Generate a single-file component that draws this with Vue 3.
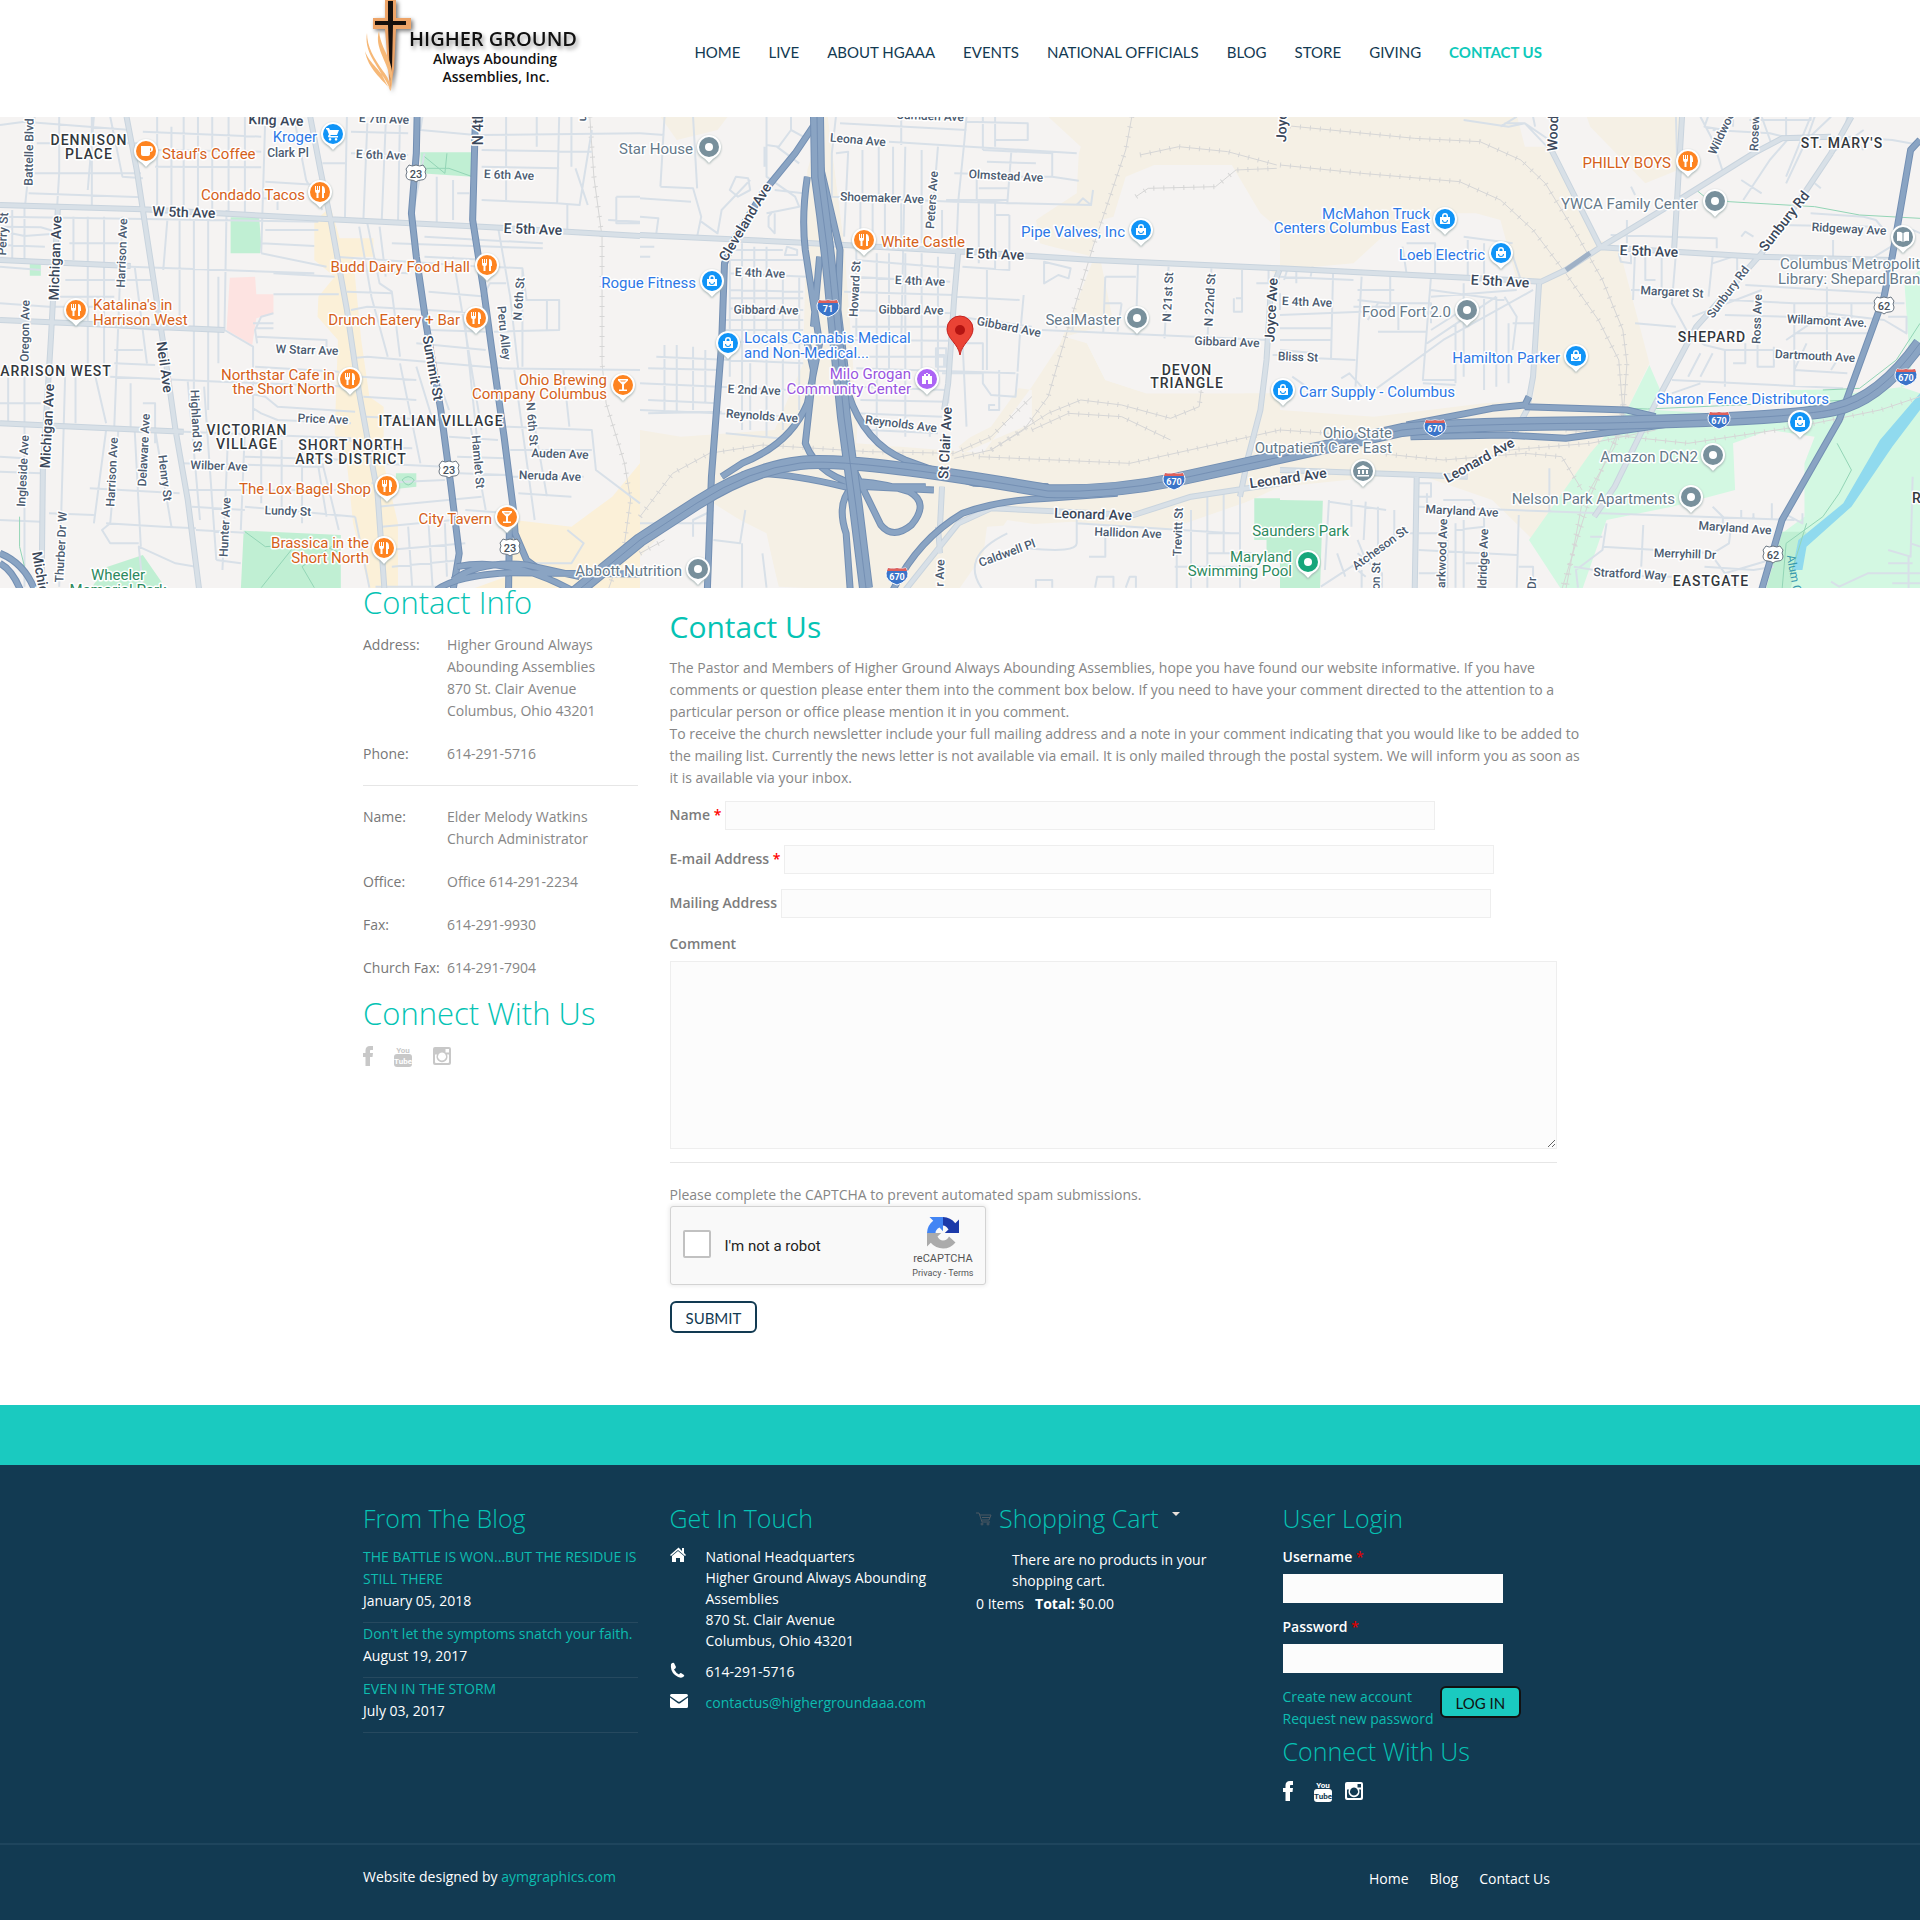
<script setup>
import { ref } from 'vue'

const nav = ['HOME', 'LIVE', 'ABOUT HGAAA', 'EVENTS', 'NATIONAL OFFICIALS', 'BLOG', 'STORE', 'GIVING', 'CONTACT US']

const people = [
  ['Address:', ['Higher Ground Always', 'Abounding Assemblies', '870 St. Clair Avenue', 'Columbus, Ohio 43201']],
  ['Phone:', ['614-291-5716']],
]
const staff = [
  ['Name:', ['Elder Melody Watkins', 'Church Administrator']],
  ['Office:', ['Office 614-291-2234']],
  ['Fax:', ['614-291-9930']],
  ['Church Fax:', ['614-291-7904']],
]
const posts = [
  ['THE BATTLE IS WON...BUT THE RESIDUE IS STILL THERE', 'January 05, 2018'],
  ["Don't let the symptoms snatch your faith.", 'August 19, 2017'],
  ['EVEN IN THE STORM', 'July 03, 2017'],
]

const form = ref({ name: '', email: '', mailing: '', comment: '' })
const login = ref({ user: '', pass: '' })
const robot = ref(false)

/* The map is three tiles, each on a 1568 x 1455 grid that covers 640 x 485 px. */
const mx = (tile, x) => Math.round(tile * 640 + x / 2.45)
const my = (y) => Math.round(y / 3 - 7)
const tileTransform = (tile) => `translate(${tile * 640} -7) scale(.40816 .33333)`
const trunk = 'M817 0L818 60Q828 130 834 200L844 300L856 390L866 471M570 480L640 423L697 386Q750 352 800 346T1048 374Q1110 376 1174 363L1280 340L1402 313Q1450 307 1606 306Q1790 302 1835 292T1920 226'

const tiles = [
  {
    tan: 'M770 335L810 290L832 385L915 385L915 440L865 440L885 690L905 860L940 890L940 1060L975 1240L975 1440L905 1440L865 1240L850 1060L820 970L828 690L778 620L780 560L820 500L770 450ZM1260 1230L1400 1250L1500 1160L1568 1060L1568 1440L1150 1440L1240 1400Z',
    yard: '',
    green: 'M565 322H635L640 405L637 430H565ZM1030 127H1157V200L1030 190ZM73 455H100V497H73ZM597 1262L835 1275V1440H590ZM260 1372L350 1335L398 1420L380 1440H220ZM970 1090H1020V1130L970 1137Z',
    mint: '',
    pink: 'M563 503L625 500L628 553H670V610L628 625L618 705L555 660Z',
    water: '',
    minor: 'M0 45L60 35L320 60M230 20L215 240M85 20L62 280M145 20V190L140 290M225 20V290M90 100H360M85 190H345M70 250L350 262M270 20L300 200L350 205M385 20V300M420 50V300M450 20V320M485 20V320M520 20V320M560 20V320M600 20V320M650 20L640 430M720 20L750 210L790 300M350 65L640 80M370 120L640 125M380 170L640 172M650 215L780 225M640 265L740 270M680 270V300M850 20L845 330M900 40L890 340M945 40L935 340M980 20L975 345M790 160H850M860 65L1000 70M860 130L1000 135M1035 20L1030 60L1165 75L1568 70M1040 130L1010 320M1070 200V340M1110 210V330M1120 250H1150M1240 20V270M1180 120L1450 125M1180 170L1370 175M1315 20V110M1370 20L1365 280L1420 285L1450 60M1400 20V170M1180 270L1365 280M1390 285L1390 360M1440 285L1410 175M1510 260H1568M1510 260V340H1568M1490 330L1568 335M0 320L780 335M0 350L100 352L150 370L60 378L10 365M0 405L110 410M60 280V450M30 300V450M0 450L320 470L770 490M0 470L100 480M0 580L120 590M0 630L550 660M180 320V450M215 320V800M255 320V760M300 320L280 950M330 470L360 760M410 330L400 480M440 330V640M475 330V850M510 330V900M535 500V760M555 300L550 660L620 710L620 930M170 400H300M160 510H370M130 560H280M120 590H330M270 650L390 660M280 720H350M280 760L380 765M270 800L540 815M640 430L800 470M640 400L770 408M650 360H780M670 490L820 500M670 553H830M670 610L640 620L625 660L630 700M630 680L800 690L800 730M625 770L830 785M540 815L860 830M610 850L650 860L680 890L870 905M620 895L640 910L680 930L860 940M820 440L1180 470M830 480L1000 490M850 545L960 550M860 600L900 590L1190 610M900 340L930 520L960 545L970 640L980 740M880 350L910 560L950 740M930 350L945 500M960 400L1330 415M1040 380L1330 400M1040 440L1200 450M860 745L900 740L1230 775L1568 780M885 800L1020 810M890 860L1020 870M895 920L1080 930M900 1010L1010 1015M905 1060L1090 1070M910 1120L1090 1110M925 1190L1180 1160M935 1250L1110 1230M950 1320L1140 1300M960 1370L1130 1350M980 760L1030 1060M1020 770L1060 930M1060 760L1100 900M1110 440L1180 960M1140 650L1170 1000M1050 545L1195 560M1050 600L1180 610M1055 660L1190 665M1020 700L1190 720M1200 470L1280 475L1290 570L1370 570L1370 660L1210 665M1220 350L1250 560L1270 780M1280 480V770M1340 570V660M1260 780L1310 1230M1210 780L1230 950M1240 950L1450 960L1460 1080L1568 1180M1250 1020H1450M1250 1100H1430M1270 1150L1400 1160M1310 950L1340 1160M1380 780L1395 950M1100 980L1220 990M1120 1040L1240 1045M1125 1090L1245 1095M1140 1200L1255 1210M1150 930L1190 1200M0 940L450 965L860 985M20 770V940M60 790V1430M0 880H100M160 780L145 1430M185 800V940M230 780L260 940M320 820V950M350 880L380 880L380 1000M460 815L490 1230M500 830L530 1350M560 940L545 1380M600 960L590 1260M440 1060L790 1070M600 1040L870 1050M450 1140H860M220 1135L440 1150M470 1190L600 1200M600 1190L870 1220M480 1260L600 1268M530 1350L590 1360M480 1370L430 1360L340 1310L350 1433M260 1240L400 1250L480 1255M270 1240L250 1260L270 1300H340M260 960L230 1240M290 960L270 1240M330 960L345 1310M380 960L420 1250M640 1000V1180M690 990V1220M740 1000V1240M790 1060L830 1260M0 1085L100 1090M0 1040L60 1045M120 1210L230 1215M0 1230L100 1235M850 990L900 1000M780 1070L800 1220M1260 1260L1300 1360H1400L1430 1300L1390 1260M620 640L670 640M1000 1250L1010 1433M1050 1240L1060 1433M1090 1240L1095 1400M870 1220L905 1433M920 1430H1070M1180 570L1200 520H1240M630 655H670',
    major: 'M0 285L350 298L810 328L1180 350L1568 378M760 20L785 180L810 330L850 600L880 850L925 1150L942 1440M310 20L335 180L375 500L400 700L430 960L460 1170L488 1440M142 290L125 680L105 1080L102 1440M0 450L320 468M0 630L550 660M0 940L450 965',
    rail: 'M1445 20L1455 200L1475 380L1475 760L1485 880L1530 1060L1545 1170L1530 1300L1490 1440',
    blue: 'M1022 15L1020 130L1008 310L1020 440L1045 650L1080 900L1105 1130L1125 1330L1110 1440M1165 15L1158 330L1185 540L1205 720L1235 980L1258 1200L1262 1270L1290 1350L1340 1395M1248 1260L1246 1440',
    hwy: 'M1070 1440Q1120 1395 1250 1388L1568 1392M1120 1370Q1250 1340 1400 1440M0 1330Q60 1360 85 1440M0 1360Q30 1380 50 1440M1110 1410Q1180 1350 1290 1365L1420 1400',
    trail: 'M48 1220V1310L60 1370M600 1265L650 1310L780 1300L835 1330M835 1290L740 1370L770 1433M640 1433L720 1310M1040 140L1090 190L1095 130M1045 175H1100L1157 200M985 1110Q1000 1090 1015 1110Q1000 1140 985 1110',
  },
  {
    tan: '',
    yard: 'M50 20H215L190 60L90 90ZM460 15L500 400L560 400L530 1000L840 1030L960 830L1030 700L1110 440L975 400L970 330L1050 240L1080 110L1000 20H1568V500L1530 470L1470 480L1110 440L1130 460L1160 640L1040 680L1095 700L1140 810L1240 850L1480 850L1568 800V1130L1480 1180L1290 1260H1060L900 1230L780 1440H500L340 1430L310 1280L180 1180L90 1220L0 1370V960L100 980L330 960L400 760L410 180L450 20ZM900 830L860 930L780 1010L790 1030L960 940L960 840ZM400 700L500 700L500 900L420 880Z',
    land: 'M1160 320L1190 200L1260 165H1400L1450 165L1520 310L1568 360V470L1100 440L1130 330ZM460 20H1000L1075 130L1070 250L970 330L980 400L1110 450L1050 640L930 830L860 950L780 1000L600 1010L530 900L500 400ZM1070 680L1568 700V850L1480 850L1240 850L1140 810L1095 700ZM0 1340L90 1225L180 1190L310 1270L340 1440H0ZM830 1440L850 1250L1060 1235L1290 1260L1500 1170L1568 1170V1440Z',
    green: 'M1505 1165H1568V1330H1535V1290H1505Z',
    mint: '', pink: '', water: '',
    minor: 'M60 20L50 230M0 70L60 75M50 230L130 235L150 320L140 380M130 20L140 235M0 265L125 275M0 320L45 325L40 370M0 410H35M0 440H25M310 20V200L380 260L390 290L310 310M310 105L340 110L370 60L400 80M370 20V60M335 110L390 160M305 110V170M235 200L265 205L270 240L240 260L220 240ZM270 210L200 300L190 370L150 335M330 310V370L315 350V320L325 305M400 250L330 240M360 410L385 420V435H355ZM480 20L470 130L470 260L770 275L1105 285L1110 240M490 40L800 60M640 20V105M800 35L950 40V90H870M800 20L795 90L780 270L775 420M610 95L1070 130M480 130L510 125L500 380M545 120V250M585 110V260M620 110V260M650 110L640 700M690 120V260M730 110L720 260M840 20V120M870 20V110M910 120L900 280L825 270V180M840 120L1010 130V200H900M850 155L970 160M1010 200L1075 212M770 190L840 192M830 235H900M750 270H900M830 270V460M870 280V480M905 315V480L790 470M870 315H905M1070 285L1085 265L1105 285M540 275V380M570 280V400M600 280V400M640 280V400M690 280V400M740 300V410M530 380V680M580 430V1000M610 430V800M650 430V980M690 430V800M730 440V800M530 450L770 475M520 500L760 515M500 545L770 555M510 600L770 610M520 650H760M520 690L755 692M520 740H750M530 775L920 790M530 830L750 840M540 870L750 875M530 910L740 920M560 960L730 970M710 940V980M220 400V800M250 400V960M280 410V700M310 410V960M350 480V960M390 500V900M220 420H350M220 450H400M220 490L410 500M220 540L400 545M220 565H400M220 595L400 600M210 630H400M210 660H400M210 695L405 700M40 740L400 760M20 775L200 780M0 820L370 840M20 870L190 880M0 900L380 920M20 910L200 905M210 970L340 985M60 705V910M90 705V905M130 710V900M160 720V880M270 760V960M310 760V980M780 480L765 650L755 880M850 480L850 780M940 555L930 690L925 785M780 620L960 650M780 700H840V780M775 560L930 570M790 690L800 950M725 715H750V770H725ZM730 735H745V770M840 790V820L860 855L920 860L925 790M880 780V860M880 860V900H855V885H870M740 790H840M990 455L1055 475L1050 505L1025 495L990 520ZM1220 465L1215 660M1140 500H1215M1140 500L1135 665M1140 580H1180M1180 580L1170 665M1295 470L1285 685M1400 475L1390 690M1460 565H1475M1455 565V605H1475V480M1510 520H1568M1550 735H1568M1540 470V520M985 660L1540 690M1060 665V640M1020 655V625M180 1290L245 1300L258 1200M180 1200L130 1230V1280M300 1330L310 1433M250 1300V1433M840 1440Q780 1340 900 1270M1070 1220V1300Q1070 1330 950 1315M1070 1240L1450 1270M1100 1340H1140V1280M1390 1150V1433M1430 1150V1330M1470 1155V1433M1350 1200V1440M1310 1370H1500M1315 1200V1440M1390 1270H1470M1390 1330H1500M970 1433V1410H1010V1433M1115 1433L1120 1400H1160V1433M1190 1433L1200 1400H1215V1433M0 1240H180',
    major: 'M0 375L400 398L800 425L1110 450L1568 475M780 420L770 560L755 820L745 900M740 1130L735 1250M1568 475L1545 550L1535 750L1520 900L1490 1040L1470 1160M650 1440L780 1240L860 1195L1210 1215L1350 1160L1568 1120M730 1250L735 1330',
    rail: 'M1205 20L1190 120L1110 410L1050 650L1000 860L940 960L860 1020L770 1045M1215 260L1245 235L1410 230L1460 180L1560 175M1225 135L1320 110L1440 125L1560 165M0 1220L80 1090L170 1030L300 1005L560 1025L770 1030L860 980L960 860M830 1040L1200 1060L1568 960M860 1020L1000 910L1080 870L1180 885L1300 925L1370 890L1375 840M960 960L1050 910L1180 920L1300 990M0 1330L60 1290',
    blue: 'M435 30L380 130L300 250L230 390L207 460L200 700L175 1100L165 1440',
    hwy: 'M410 200Q395 320 405 420L440 700L410 880Q370 1000 250 1060L200 1100M440 160L490 420L485 600L510 850Q550 1000 650 1050L740 1090M410 700L425 780L405 1000Q440 1110 560 1130L720 1140M250 1095Q330 1080 500 1130L700 1130M520 1070L590 1245Q620 1290 665 1245Q710 1180 660 1145Q600 1120 540 1115M620 1440Q680 1290 790 1210Q880 1170 1000 1165L1170 1150M520 1130Q480 1180 505 1270L515 1440M590 1070Q700 1070 820 1120L1000 1130M440 440L425 650M460 440L470 600L500 700',
    trail: '',
  },
  {
    tan: '',
    yard: 'M0 15H580L600 110L660 110L780 390L830 410L905 760L850 900L740 1080L620 1290L520 1170L330 1090L0 1130V900L230 920L500 880L620 870L640 520L580 510L540 330L480 310L390 310L260 370L180 460L0 480ZM750 15H985L975 180L895 220L760 50Z',
    green: 'M0 1170L105 1172L98 1440H0ZM1230 1265H1290L1250 1440H1190Z',
    mint: 'M905 765L935 850L920 900L1200 920L1400 850L1530 830L1568 690V480L1530 520L1540 700L1520 830L1568 850V1440H1240L1230 1270L1285 1220L1285 1060L1310 980L1200 960L1110 1000L1115 1140L960 1190L800 1230L740 1440H690L610 1290L760 1030L850 900ZM1250 840L1390 838L1380 870L1250 860Z',
    pink: '', water: 'M1568 850L1470 990L1380 1180L1270 1290L1255 1380H1280L1290 1310L1400 1190L1500 1010L1568 900Z',
    minor: 'M0 500L180 510M20 470L10 510M80 470L75 500M40 480V520M130 490L125 745M200 500L185 830M0 655H125M0 690H125M0 615L200 605M0 720L90 730L90 745L185 750M190 570L260 580H370V640M240 665H360M370 500L350 810H430M240 580L215 630M290 580V660M310 400H380V500M270 500V590M190 540H280M300 410L310 490M370 540L550 570M370 560L580 540M450 520V800M500 560V840M530 560V830M560 640V820M360 700L530 560M370 660L460 590M550 560L580 620L570 720M570 640H625M430 640V820M350 820L430 825M150 805L170 790L200 830M220 850L400 690L620 540M180 590H270M0 550V600M460 390V500M500 400V500M560 400L590 510M450 380L570 400M100 860L30 800M450 30L560 50L600 40L670 130M540 50L580 20M620 20L625 50M550 40H600L660 90M860 230L870 255M850 330V400M830 430L835 455L860 460V430M810 375L1070 385V415M870 420L865 570M895 430V510L920 510M935 420V540H860M970 430L960 580L1000 670L1040 705L1090 720L1210 720M870 640L970 650M870 540L960 545M1060 440L1050 560M1120 440V520M1060 460L1110 440M1010 620L1180 540M1090 615L1390 625M1100 570L1260 580L1530 580M1140 525L1480 550M1260 580V830M1340 530V730M1400 580V640M1260 670H1440M1340 610L1480 630L1535 670V620L1490 620M1090 720V830M1170 700V770H1210V710M1110 760H1140V700M1290 700L1260 780M1300 640L1240 690M1370 740L1350 780M1260 780L1390 790M960 810L1380 835M1060 730L1030 800M1030 730L1000 800M960 850L1030 820M975 240L970 20M1150 30H1300V20M1030 20L1060 90L1085 185M1060 60L1200 70L1270 90M1180 20L1205 105M1110 20V50M1250 80L1200 150L1135 270M1300 20L1240 200M1350 20L1290 90L1240 220M1230 90L1400 80L1430 120M1240 20V80M1290 90L1310 20M1350 130L1430 60M1390 20L1380 80L1500 90L1568 105M1210 345L1460 350M1300 310L1430 320L1460 330L1480 360M1310 220L1325 235M1130 380L1140 365L1160 380M1355 390V440M1185 440L1450 445L1510 400M1570 370L1550 360L1540 370M1180 250L1130 210M1050 15L1040 50L1090 60M120 1170L110 1380M175 1170V1250M210 1175L205 1290M240 1190V1320M280 1200V1300M120 1175L260 1200M100 1430L300 1270H330M180 1370L210 1400M210 1350L190 1290M140 1330L160 1400M200 1433V1380M250 1433V1390L190 1330M340 1120H370V1160H340M340 1190L1260 1230M340 1320L580 1335M340 1270H410M430 1240V1433M450 1230V1433M500 1200V1433M360 1180V1150M400 1170L470 1170L480 1190M410 1210V1433M340 1390H400M430 1260L500 1250M455 1360H500M585 1215L580 1433M585 1370H620V1433M660 1075V1210M800 1240L790 1320L725 1380L730 1433M720 1370L770 1380M790 1310L1060 1330L1100 1300L1105 1250M890 1245L885 1370M760 1280H790M770 1395L960 1400M1060 1340L1090 1390L1200 1350M1040 1370L1160 1380L1210 1370M1085 1260V1220L1060 1190M1130 1230V1200M1160 1230V1210M1205 1230V1180M1235 1210L1280 1240V1210M1350 1415L1370 1430L1440 1390H1568M1490 1360H1550M1550 1100L1545 1340L1490 1320M1545 1300L1568 1310M1500 1420H1568M1540 1340V1440',
    major: 'M0 475L360 497L640 515L700 480L785 412L1170 440L1500 450M665 120L785 412L990 260L1160 130L1230 85L1350 80M635 515L620 800L605 900L570 980M0 1080L345 1095L460 1100M335 1095L330 1440M1350 130L1290 240L1180 430L1020 650L920 880L820 1130L770 1220M1400 20L1350 130M985 20L965 430',
    rail: 'M0 45L330 85L490 95L590 150L650 220L730 380L790 510L840 660L850 760L840 930L760 1160L690 1440M0 165L200 190L440 215L540 270L620 360L700 490L780 630L830 750L840 900L820 1010L740 1180L700 1440M0 960L120 970L240 1030L400 1050L600 1030L690 1040L740 1140M230 980L380 960M700 960L1000 1000L1270 950L1470 900L1568 860M560 1020L760 1000L920 960',
    blue: 'M1568 90L1545 120L1500 440L1480 560L1370 930L1230 1230L1180 1440',
    hwy: 'M310 945L520 895L600 885L610 860M600 890L850 900L920 920M320 980L550 975L700 985L850 960L990 935',
    trail: 'M1020 240L1040 260L1100 275L1310 290L1420 315L1568 325M620 885L900 897L1400 870M1330 840L1420 835L1510 750L1568 640M1365 1000L1400 1080L1370 1150L1330 1220L1240 1300L1230 1440M1290 1240L1250 1400',
  },
]

/* tile, x, y, text, kind, anchor, angle */
const labels = [
  [0, 218, 91, 'DENNISON', 'area', 'middle'], [0, 218, 132, 'PLACE', 'area', 'middle'],
  [0, 136, 784, 'ARRISON WEST', 'area', 'middle'], [0, 606, 959, 'VICTORIAN', 'area', 'middle'], [0, 606, 1001, 'VILLAGE', 'area', 'middle'],
  [0, 859, 1006, 'SHORT NORTH', 'area', 'middle'], [0, 859, 1047, 'ARTS DISTRICT', 'area', 'middle'], [0, 1080, 934, 'ITALIAN VILLAGE', 'area', 'middle'],
  [1, 1340, 779, 'DEVON', 'area', 'middle'], [1, 1340, 820, 'TRIANGLE', 'area', 'middle'],
  [2, 1378, 100, "ST. MARY'S", 'area', 'middle'], [2, 1058, 680, 'SHEPARD', 'area', 'middle'], [2, 1057, 1412, 'EASTGATE', 'area', 'middle'], [2, 1548, 1165, 'R', 'area'],
  [0, 398, 131, "Stauf's Coffee", 'food'], [0, 747, 254, 'Condado Tacos', 'food', 'end'], [0, 1152, 471, 'Budd Dairy Food Hall', 'food', 'end'],
  [0, 228, 585, "Katalina's in", 'food'], [0, 228, 629, 'Harrison West', 'food'], [0, 1127, 631, 'Drunch Eatery + Bar', 'food', 'end'],
  [0, 820, 794, 'Northstar Cafe in', 'food', 'end'], [0, 820, 838, 'the Short North', 'food', 'end'],
  [0, 1487, 809, 'Ohio Brewing', 'food', 'end'], [0, 1487, 853, 'Company Columbus', 'food', 'end'],
  [0, 909, 1136, 'The Lox Bagel Shop', 'food', 'end'], [0, 1205, 1227, 'City Tavern', 'food', 'end'],
  [0, 903, 1300, 'Brassica in the', 'food', 'end'], [0, 903, 1343, 'Short North', 'food', 'end'],
  [1, 590, 397, 'White Castle', 'food'], [2, 959, 160, 'PHILLY BOYS', 'food', 'end'],
  [0, 777, 80, 'Kroger', 'shop', 'end'], [1, 138, 520, 'Rogue Fitness', 'shop', 'end'], [1, 255, 685, 'Locals Cannabis Medical', 'shop'], [1, 255, 729, 'and Non-Medical...', 'shop'],
  [1, 1188, 366, 'Pipe Valves, Inc', 'shop', 'end'], [2, 368, 311, 'McMahon Truck', 'shop', 'end'], [2, 368, 355, 'Centers Columbus East', 'shop', 'end'],
  [2, 502, 435, 'Loeb Electric', 'shop', 'end'], [2, 686, 744, 'Hamilton Parker', 'shop', 'end'], [2, 47, 847, 'Carr Supply - Columbus', 'shop'], [2, 1346, 867, 'Sharon Fence Distributors', 'shop', 'end'],
  [1, 664, 792, 'Milo Grogan', 'civic', 'end'], [1, 664, 836, 'Community Center', 'civic', 'end'],
  [1, 130, 118, 'Star House', 'place', 'end'], [1, 1179, 630, 'SealMaster', 'place', 'end'], [1, 103, 1384, 'Abbott Nutrition', 'place', 'end'],
  [2, 1025, 281, 'YWCA Family Center', 'place', 'end'], [2, 420, 605, 'Food Fort 2.0', 'place', 'end'],
  [2, 274, 970, 'Ohio State', 'place', 'end'], [2, 274, 1015, 'Outpatient Care East', 'place', 'end'],
  [2, 1024, 1040, 'Amazon DCN2', 'place', 'end'], [2, 968, 1168, 'Nelson Park Apartments', 'place', 'end'],
  [2, 1224, 463, 'Columbus Metropolitan', 'place'], [2, 1219, 507, 'Library: Shepard Branch', 'place'],
  [0, 290, 1396, 'Wheeler', 'park', 'middle'], [0, 290, 1440, 'Memorial Park', 'park', 'middle'],
  [2, 168, 1263, 'Saunders Park', 'park', 'end'], [2, 29, 1340, 'Maryland', 'park', 'end'], [2, 29, 1384, 'Swimming Pool', 'park', 'end'],
  [0, 452, 305, 'W 5th Ave', 'road', 'middle', 2], [0, 1305, 358, 'E 5th Ave', 'road', 'middle', 2], [1, 870, 432, 'E 5th Ave', 'road', 'middle', 2],
  [2, 905, 424, 'E 5th Ave', 'road', 'middle', 2], [2, 540, 514, 'E 5th Ave', 'road', 'middle', 3], [0, 676, 30, 'King Ave', 'road', 'middle', 2],
  [0, 134, 443, 'Michigan Ave', 'road', 'middle', -88], [0, 115, 947, 'Michigan Ave', 'road', 'middle', -87], [0, 104, 1410, 'Michigan', 'road', 'middle', 80],
  [0, 405, 770, 'Neil Ave', 'road', 'middle', 82], [0, 1060, 773, 'Summit St', 'road', 'middle', 80], [0, 1170, 30, 'N 4th St', 'road', 'middle', -90],
  [1, 258, 336, 'Cleveland Ave', 'road', 'middle', -59], [1, 748, 998, 'St Clair Ave', 'road', 'middle', -87], [1, 1545, 600, 'Joyce Ave', 'road', 'middle', -87],
  [1, 1110, 1211, 'Leonard Ave', 'road', 'middle', 2], [2, 20, 1103, 'Leonard Ave', 'road', 'middle', -8], [2, 487, 1050, 'Leonard Ave', 'road', 'middle', -29],
  [2, 1235, 334, 'Sunbury Rd', 'road', 'middle', -52], [2, 670, 30, 'Woodland', 'road', 'middle', -88], [2, 4, 0, 'Joyce Ave', 'road', 'middle', -88],
  [0, 70, 125, 'Battelle Blvd', 'st', 'middle', -89], [0, 940, 28, 'E 7th Ave', 'st', 'middle', 2], [0, 706, 129, 'Clark Pl', 'st', 'middle'], [0, 934, 135, 'E 6th Ave', 'st', 'middle', 2],
  [0, 1248, 196, 'E 6th Ave', 'st', 'middle', 2], [0, 8, 372, 'Perry St', 'st', 'middle', -87], [0, 298, 428, 'Harrison Ave', 'st', 'middle', -88], [0, 62, 662, 'Oregon Ave', 'st', 'middle', -89],
  [0, 753, 720, 'W Starr Ave', 'st', 'middle', 2], [0, 1272, 568, 'N 6th St', 'st', 'middle', -86], [0, 1236, 668, 'Peru Alley', 'st', 'middle', 84], [0, 480, 932, 'Highland St', 'st', 'middle', 87],
  [0, 792, 928, 'Price Ave', 'st', 'middle', 2], [0, 1303, 943, 'N 6th St', 'st', 'middle', 85], [0, 536, 1067, 'Wilber Ave', 'st', 'middle', 2], [0, 1170, 1055, 'Hamlet St', 'st', 'middle', 85],
  [0, 1372, 1031, 'Auden Ave', 'st', 'middle', 2], [0, 1347, 1098, 'Neruda Ave', 'st', 'middle', 2], [0, 352, 1021, 'Delaware Ave', 'st', 'middle', -87], [0, 274, 1086, 'Harrison Ave', 'st', 'middle', -87],
  [0, 57, 1082, 'Ingleside Ave', 'st', 'middle', -87], [0, 404, 1103, 'Henry St', 'st', 'middle', 83], [0, 706, 1203, 'Lundy St', 'st', 'middle', 2], [0, 552, 1250, 'Hunter Ave', 'st', 'middle', -87],
  [0, 150, 1312, 'Thurber Dr W', 'st', 'middle', -87],
  [1, 710, 18, 'Camden Ave', 'st', 'middle', 2], [1, 533, 91, 'Leona Ave', 'st', 'middle', 5], [1, 897, 198, 'Olmstead Ave', 'st', 'middle', 3], [1, 593, 263, 'Shoemaker Ave', 'st', 'middle', 2],
  [1, 715, 271, 'Peters Ave', 'st', 'middle', -86], [1, 293, 489, 'E 4th Ave', 'st', 'middle', 2], [1, 686, 512, 'E 4th Ave', 'st', 'middle', 2], [1, 527, 537, 'Howard St', 'st', 'middle', -87],
  [1, 308, 600, 'Gibbard Ave', 'st', 'middle', 1], [1, 664, 600, 'Gibbard Ave', 'st', 'middle', 1], [1, 905, 650, 'Gibbard Ave', 'st', 'middle', 11], [1, 1437, 695, 'Gibbard Ave', 'st', 'middle', 2],
  [1, 280, 839, 'E 2nd Ave', 'st', 'middle', 2], [1, 299, 917, 'Reynolds Ave', 'st', 'middle', 4], [1, 640, 942, 'Reynolds Ave', 'st', 'middle', 7], [1, 1293, 560, 'N 21st St', 'st', 'middle', -87],
  [1, 1397, 571, 'N 22nd St', 'st', 'middle', -87], [1, 1195, 1268, 'Hallidon Ave', 'st', 'middle', 2], [1, 900, 1328, 'Caldwell Pl', 'st', 'middle', -20], [1, 1318, 1265, 'Trevitt St', 'st', 'middle', -88],
  [1, 734, 1390, 'r Ave', 'st', 'middle', -88], [0, 1427, 24, 'u', 'st', 'middle', -88],
  [2, 65, 575, 'E 4th Ave', 'st', 'middle', 2], [2, 44, 741, 'Bliss St', 'st', 'middle', 2], [2, 1085, 60, 'Wildwood', 'st', 'middle', -65], [2, 1164, 40, 'Rosewood', 'st', 'middle', -88],
  [2, 1395, 358, 'Ridgeway Ave', 'st', 'middle', 3], [2, 961, 547, 'Margaret St', 'st', 'middle', 3], [2, 1098, 547, 'Sunbury Rd', 'st', 'middle', -53], [2, 1169, 628, 'Ross Ave', 'st', 'middle', -88],
  [2, 1341, 633, 'Willamont Ave.', 'st', 'middle', 3], [2, 1310, 737, 'Dartmouth Ave', 'st', 'middle', 3], [2, 447, 1203, 'Maryland Ave', 'st', 'middle', 3], [2, 1114, 1255, 'Maryland Ave', 'st', 'middle', 4],
  [2, 245, 1314, 'Atcheson St', 'st', 'middle', -36], [2, 396, 1340, 'Parkwood Ave', 'st', 'middle', -88], [2, 497, 1356, 'Eldridge Ave', 'st', 'middle', -88], [2, 234, 1398, 'on St', 'st', 'middle', -88],
  [2, 993, 1331, 'Merryhill Dr', 'st', 'middle', 2], [2, 857, 1392, 'Stratford Way', 'st', 'middle', 3], [2, 618, 1418, 'Dr', 'st', 'middle', -88], [2, 1264, 1425, 'Alum Creek', 'creek', 'middle', 80],
].map(([t, x, y, text, kind, anchor = 'start', turn = 0]) => ({ x: mx(t, x), y: my(y), text, kind, anchor, turn }))

const colors = { food: '#fe8421', shop: '#1094f7', place: '#78909c', civic: '#ac64f5', park: '#17a67b' }
const pins = [
  [0, 816, 72, 'shop', 'cart'], [0, 358, 122, 'food', 'cup'], [0, 785, 247, 'food', 'fork'], [0, 1192, 464, 'food', 'fork'], [0, 187, 600, 'food', 'fork'],
  [0, 1165, 624, 'food', 'fork'], [0, 858, 808, 'food', 'fork'], [0, 1527, 824, 'food', 'glass'], [0, 947, 1129, 'food', 'fork'], [0, 1243, 1220, 'food', 'glass'], [0, 942, 1314, 'food', 'fork'],
  [1, 168, 112, 'place', 'dot'], [1, 550, 390, 'food', 'fork'], [1, 1228, 359, 'shop', 'bag'], [1, 177, 513, 'shop', 'bag'], [1, 216, 700, 'shop', 'bag'],
  [1, 704, 806, 'civic', 'hall'], [1, 1218, 623, 'place', 'dot'], [1, 141, 1377, 'place', 'dot'],
  [2, 999, 154, 'food', 'fork'], [2, 1065, 274, 'place', 'dot'], [2, 405, 326, 'shop', 'bag'], [2, 541, 429, 'shop', 'bag'], [2, 459, 599, 'place', 'dot'],
  [2, 725, 738, 'shop', 'bag'], [2, 7, 840, 'shop', 'bag'], [2, 1275, 936, 'shop', 'bag'], [2, 1527, 381, 'place', 'book'], [2, 203, 1084, 'place', 'bank'],
  [2, 1062, 1034, 'place', 'dot'], [2, 1006, 1162, 'place', 'dot'], [2, 69, 1355, 'park', 'dot'],
].map(([t, x, y, kind, glyph]) => ({ x: mx(t, x), y: my(y), fill: colors[kind], glyph }))

const glyphs = {
  fork: 'M-5-6h1v4h1v-4h1v4h1v-4h1v5q0 2-1.500 2v5h-2v-5q-1.500 0-1.500-2zM2-6q3 0 3 5v2h-1v5h-2z',
  cup: 'M-5-5h9q3 0 3 3t-3 3v2q0 2-2 2h-5q-2 0-2-2zM4-3v3q1 0 1-1.500t-1-1.500z',
  glass: 'M-5-6h10v1.500l-4 4v5h3v1.500h-8v-1.500h3v-5l-4-4zM-3-4.500l1 1h4l1-1z',
  bag: 'M-5-2h2v-1a3 3 0 0 1 6 0v1h2v7h-10zM-1.500-2h3v-1a1.500 1.500 0 0 0-3 0zM-3 1a3 3 0 0 0 6 0h-1a2 2 0 0 1-4 0z',
  dot: 'M-4 0a4 4 0 1 0 8 0a4 4 0 1 0-8 0z',
  cart: 'M-7-6h3l1 2h9l-2 5h-6l-1 1h8v1.500h-9q-2-1 0-3l-2-5h-1zM-3 4a1.300 1.300 0 1 0 .1 0zM3 4a1.300 1.300 0 1 0 .1 0z',
  book: 'M-6-5q3-1 5.500 1v9q-2.500-2-5.500-1zM6-5q-3-1-5.500 1v9q2.500-2 5.500-1z',
  bank: 'M0-6l6 3v1h-12v-1zM-5-1h2v4h-2zM-1-1h2v4h-2zM3-1h2v4h-2zM-6 4h12v1.500h-12z',
  hall: 'M-5 5v-8h2v-2h6v2h2v8h-4v-4h-2v4zM-1-6h2v3h-2z',
}

const usShields = [[0, 1018, 189, '23'], [0, 1099, 1076, '23'], [0, 1249, 1310, '23'], [2, 1479, 585, '62'], [2, 1207, 1331, '62']].map(([t, x, y, n]) => ({ x: mx(t, x), y: my(y), n }))
const interstates = [[1, 460, 594, '71'], [1, 1308, 1114, '670'], [1, 630, 1398, '670'], [2, 379, 955, '670'], [2, 1076, 930, '670'], [2, 1533, 802, '670']].map(([t, x, y, n]) => ({ x: mx(t, x), y: my(y), n }))
</script>

<template>
  <div class="page">
    <header class="top wrap">
      <a href="#" class="logo" aria-label="Higher Ground Always Abounding Assemblies, Inc.">
        <svg width="230" height="96" viewBox="0 0 230 96">
          <g class="shade">
            <path d="M22 0h11v18h15v11H33l-2 40-4 22-5-62H10V18h12z" fill="#eda468" />
            <path d="M25 1h5v20h13v4H30l-1 42-2 14-2-56H12v-4h13z" fill="#150f0c" />
          </g>
          <path d="M4 33c-3 18 9 30 15 42 4 8 6 12 9 16-1-9-3-14-8-20C11 58 4 47 4 33zM16 31c-5 16 8 30 11 46 1 4 1 8 1 13 2-10 2-20-2-30-3-8-9-17-10-29zM2 51c5 14 16 17 25 38-8-10-22-20-25-38z" fill="#f6b877" />
          <text x="46" y="46" class="logo-a">HIGHER GROUND</text>
          <text x="132" y="64" class="logo-b" text-anchor="middle">Always Abounding</text>
          <text x="133" y="82" class="logo-b" text-anchor="middle">Assemblies, Inc.</text>
        </svg>
      </a>
      <nav class="menu">
        <a v-for="item in nav" :key="item" href="#" :class="{ on: item === 'CONTACT US' }">{{ item }}</a>
      </nav>
    </header>

    <svg class="map" viewBox="0 0 1920 471" preserveAspectRatio="xMidYMid slice" role="img" aria-label="Map of 870 St. Clair Avenue">
      <rect width="1920" height="471" fill="#f5f3f2" />
      <g v-for="(t, i) in tiles" :key="'area' + i" :transform="tileTransform(i)">
        <path :d="t.yard" fill="#f5f0e5" />
        <path v-if="t.land" :d="t.land" fill="#f5f3f2" />
        <path :d="t.tan" fill="#fbf0d8" />
        <path :d="t.mint" fill="#d3f8e2" />
        <path :d="t.green" fill="#c0efd3" />
        <path :d="t.pink" fill="#fde3e1" />
        <path :d="t.water" fill="#90daee" />
      </g>
      <g v-for="(t, i) in tiles" :key="'road' + i" :transform="tileTransform(i)" class="roads">
        <path :d="t.rail" stroke="#d6d6d6" stroke-width="1" />
        <path :d="t.rail" stroke="#d6d6d6" stroke-width="5" stroke-dasharray="1 9" />
        <path :d="t.minor" stroke="#d8e0e8" stroke-width="2" />
        <path :d="t.trail" stroke="#93d5b6" stroke-width="1" />
        <path :d="t.major" stroke="#c9d4de" stroke-width="6" />
        <path :d="t.major" stroke="#d8e0e7" stroke-width="4" />
      </g>
      <g v-for="(t, i) in tiles" :key="'hwy' + i" :transform="tileTransform(i)" class="roads">
        <path :d="t.blue" stroke="#738fb3" stroke-width="7" />
        <path :d="t.blue" stroke="#8aa4c3" stroke-width="5" />
        <path :d="t.hwy" stroke="#738fb3" stroke-width="7" />
        <path :d="t.hwy" stroke="#8aa4c3" stroke-width="5" />
      </g>
      <g class="roads">
        <path d="M1566 153L1590 136" stroke="#9fb1c6" stroke-width="5" />
        <path :d="trunk" stroke="#738fb3" stroke-width="14" />
        <path :d="trunk" stroke="#8aa4c3" stroke-width="12" />
        <path :d="trunk" stroke="#7590b4" stroke-width="1" />
      </g>

      <g v-for="(s, i) in usShields" :key="'us' + i" :transform="`translate(${s.x} ${s.y})`">
        <path d="M-7-8q3 2 7 0q4 2 7 0l3 4q-2 3 0 6q0 5-5 5q-3 0-5 2q-2-2-5-2q-5 0-5-5q2-3 0-6z" fill="#fff" stroke="#6b7682" />
        <text y="1" class="shield us">{{ s.n }}</text>
      </g>
      <g v-for="(s, i) in interstates" :key="'is' + i" :transform="`translate(${s.x} ${s.y})`">
        <path d="M-9-8q5 1 9 0q4 1 9 0l2 5q1 8-11 12q-12-4-11-12z" fill="#3a74c9" stroke="#fff" />
        <path d="M-9-8q5 1 9 0q4 1 9 0l1 3h-20z" fill="#e0605a" />
        <text y="1" class="shield">{{ s.n }}</text>
      </g>

      <text v-for="(l, i) in labels" :key="'label' + i" :x="l.x" :y="l.y" :class="['lab', l.kind]" :text-anchor="l.anchor" :transform="l.turn ? `rotate(${l.turn} ${l.x} ${l.y})` : null">{{ l.text }}</text>

      <g v-for="(p, i) in pins" :key="'pin' + i" :transform="`translate(${p.x} ${p.y})`">
        <path d="M0 16Q-3 12-8 9A12 12 0 1 1 8 9Q3 12 0 16Z" fill="#fff" class="pin-shade" />
        <circle r="10" :fill="p.fill" />
        <path :d="glyphs[p.glyph]" fill="#fff" fill-rule="evenodd" />
      </g>
      <g transform="translate(960 213)">
        <path d="M0 25C-2 13-13 9-13-1A13 13 0 1 1 13-1C13 9 2 13 0 25Z" fill="#ea4335" stroke="#c5221f" />
        <circle r="5" fill="#b31412" />
      </g>
    </svg>

    <main class="wrap grid body">
      <aside class="side">
        <h2>Contact Info</h2>
        <dl>
          <div v-for="[k, lines] in people" :key="k"><dt>{{ k }}</dt><dd><span v-for="l in lines" :key="l">{{ l }}</span></dd></div>
        </dl>
        <hr />
        <dl>
          <div v-for="[k, lines] in staff" :key="k"><dt>{{ k }}</dt><dd><span v-for="l in lines" :key="l">{{ l }}</span></dd></div>
        </dl>
        <h2 class="connect">Connect With Us</h2>
        <div class="social pale">
          <a href="#" aria-label="Facebook"><svg width="10" height="22" viewBox="0 0 10 22"><path d="M10 1v4H8C7 5 7 5.500 7 6.500V8h3l-.5 4H7v9H2.500v-9H0V8h2.500V5.500C2.500 2.500 4 1 7 1z" /></svg></a>
          <a href="#" aria-label="YouTube"><svg width="18" height="22" viewBox="0 0 18 22"><text x="9" y="8" class="yt">You</text><rect y="9" width="18" height="13" rx="3" /><text x="9" y="19" class="yt cut">Tube</text></svg></a>
          <a href="#" aria-label="Instagram"><svg width="18" height="22" viewBox="0 0 18 22"><path fill-rule="evenodd" d="M2 2h14q2 0 2 2v14q0 2-2 2H2q-2 0-2-2V4q0-2 2-2zM12.500 4v3.500H16V4zM2 9.500V17q0 1 1 1h12q1 0 1-1V9.500h-2a5.500 5.500 0 1 1-10 0zM9 7.500a4 4 0 1 0 .01 0z" /></svg></a>
        </div>
      </aside>

      <section class="content">
        <h1>Contact Us</h1>
        <p>The Pastor and Members of Higher Ground Always Abounding Assemblies, hope you have found our website informative. If you have comments or question please enter them into the comment box below. If you need to have your comment directed to the attention to a particular person or office please mention it in you comment.<br />To receive the church newsletter include your full mailing address and a note in your comment indicating that you would like to be added to the mailing list. Currently the news letter is not available via email. It is only mailed through the postal system. We will inform you as soon as it is available via your inbox.</p>
        <form @submit.prevent>
          <div class="row"><label for="name">Name <b class="req">*</b></label><input id="name" v-model="form.name" type="text" /></div>
          <div class="row"><label for="email">E-mail Address <b class="req">*</b></label><input id="email" v-model="form.email" type="email" /></div>
          <div class="row"><label for="mailing">Mailing Address</label><input id="mailing" v-model="form.mailing" type="text" /></div>
          <label for="comment" class="block">Comment</label>
          <textarea id="comment" v-model="form.comment"></textarea>
          <hr />
          <div>Please complete the CAPTCHA to prevent automated spam submissions.</div>
          <div class="captcha">
            <input id="robot" v-model="robot" type="checkbox" />
            <label for="robot">I'm not a robot</label>
            <div class="brand">
              <svg width="32" height="32" viewBox="0 0 64 64">
                <path fill="#1c3aa9" d="M64 32V5l-7.500 7.500A32 32 0 0 0 32 0v17q-1 0 0 0 6 0 11 8l-7.500 7H64z" />
                <path fill="#4285f4" d="M32 0H5l7.500 7.500A32 32 0 0 0 0 32h17q0-7 8-11l7 7.500z" />
                <path fill="#ababab" d="M0 32v27l7.500-7.500A32 32 0 0 0 57 51L44 39q-4 8-12 8-7 0-11-8l7.500-7z" />
              </svg>
              <span class="rc">reCAPTCHA</span>
              <span class="terms"><a href="#">Privacy</a> - <a href="#">Terms</a></span>
            </div>
          </div>
          <button class="submit" type="submit">SUBMIT</button>
        </form>
      </section>
    </main>

    <div class="band"></div>

    <footer>
      <div class="wrap grid cols">
        <section>
          <h3>From The Blog</h3>
          <article v-for="[t, d] in posts" :key="t"><a href="#">{{ t }}</a><div>{{ d }}</div></article>
        </section>
        <section>
          <h3>Get In Touch</h3>
          <ul class="touch">
            <li>
              <svg width="18" height="18" viewBox="0 0 18 18"><path d="M8 2L0 9l1 1 7-6 7 6 1-1-2-2V2h-2v3L9 2Q8 1 8 2zM8 5l-6 5v6h4v-4h4v4h4v-6z" /></svg>
              <div>National Headquarters<br />Higher Ground Always Abounding Assemblies<br />870 St. Clair Avenue<br />Columbus, Ohio 43201</div>
            </li>
            <li>
              <svg width="18" height="18" viewBox="0 0 18 18"><path d="M1 3Q3 1 4 2l2 4q0 1-2 2.500Q6 12 9 13.500q1-2 2-1.500l3 2q1 1-1 2-3 2-8-2T1 3z" /></svg>
              <div>614-291-5716</div>
            </li>
            <li>
              <svg width="18" height="18" viewBox="0 0 18 18"><path d="M1.500 2h15q1.500 0 1.500 2l-8 5.500q-1 .7-2 0L0 4q0-2 1.500-2zM0 5.500l7.500 5.500q1.500 1 3 0L18 5.500v9q0 1.500-1.500 1.500h-15q-1.500 0-1.500-1.500z" /></svg>
              <a href="#">contactus@highergroundaaa.com</a>
            </li>
          </ul>
        </section>
        <section>
          <h3 class="cart">
            <svg width="16" height="14" viewBox="0 0 16 14" fill="none" stroke="#4d5963"><path d="M0 1h3l3 9h8M4 3h11l-2 5H6M6 5.500h8" /><circle cx="6" cy="12" r="1" /><circle cx="12" cy="12" r="1" /></svg>
            <span>Shopping Cart</span>
            <svg class="arrow" width="8" height="5" viewBox="0 0 8 5"><path d="M0 0h8L4 4z" fill="#e9e0da" /></svg>
          </h3>
          <p class="empty">There are no products in your shopping cart.</p>
          <div class="sum"><span>0 Items</span><span><b>Total:</b> $0.00</span></div>
        </section>
        <section>
          <h3>User Login</h3>
          <form class="login" @submit.prevent>
            <label for="user">Username <b class="req">*</b></label>
            <input id="user" v-model="login.user" type="text" />
            <label for="pass">Password <b class="req">*</b></label>
            <input id="pass" v-model="login.pass" type="password" />
            <div class="acts">
              <div><a href="#">Create new account</a><br /><a href="#">Request new password</a></div>
              <button type="submit">LOG IN</button>
            </div>
          </form>
          <h3 class="again">Connect With Us</h3>
          <div class="social">
            <a href="#" aria-label="Facebook"><svg width="10" height="22" viewBox="0 0 10 22"><path d="M10 1v4H8C7 5 7 5.500 7 6.500V8h3l-.5 4H7v9H2.500v-9H0V8h2.500V5.500C2.500 2.500 4 1 7 1z" /></svg></a>
            <a href="#" aria-label="YouTube"><svg width="18" height="22" viewBox="0 0 18 22"><text x="9" y="8" class="yt">You</text><rect y="9" width="18" height="13" rx="3" /><text x="9" y="19" class="yt cut">Tube</text></svg></a>
            <a href="#" class="near" aria-label="Instagram"><svg width="18" height="22" viewBox="0 0 18 22"><path fill-rule="evenodd" d="M2 2h14q2 0 2 2v14q0 2-2 2H2q-2 0-2-2V4q0-2 2-2zM12.500 4v3.500H16V4zM2 9.500V17q0 1 1 1h12q1 0 1-1V9.500h-2a5.500 5.500 0 1 1-10 0zM9 7.500a4 4 0 1 0 .01 0z" /></svg></a>
          </div>
        </section>
      </div>
      <div class="bottom">
        <div class="wrap">
          <span>Website designed by <a href="#">aymgraphics.com</a></span>
          <nav><a href="#">Home</a><a href="#">Blog</a><a href="#">Contact Us</a></nav>
        </div>
      </div>
    </footer>
  </div>
</template>

<style>
body { margin: 0; background: #fff; }
</style>

<style scoped>
* { box-sizing: border-box; }
.page { font: 14px/22px "Open Sans", "Noto Sans", sans-serif; color: #868686; }
.wrap { max-width: 1194px; margin: 0 auto; }
.grid { display: grid; grid-template-columns: repeat(4, minmax(0, 1fr)); gap: 0 32px; }
a { color: #0dbdb0; text-decoration: none; }
h1, h2, h3, p, dl, dd, ul { margin: 0; padding: 0; font-weight: 300; }
p, dd, ul { font-weight: 400; }
h1, h2, h3 { color: #05c3b4; }
hr { border: 0; border-top: 1px solid #e6e6e6; margin: 20px 0; }
input, textarea, button { font: inherit; }

.top { display: flex; justify-content: space-between; height: 117px; }
.logo { width: 230px; }
.logo svg { display: block; }
.logo-a { font: 600 20px "Open Sans", sans-serif; fill: #111; filter: drop-shadow(2px 3px 2px #999); }
.logo-b { font: 600 14px "Open Sans", sans-serif; fill: #111; }
.shade { filter: drop-shadow(2px 2px 2px #777); }
.menu { display: flex; gap: 28px; padding: 40px 15px 0 0; font: 400 15px/24px Lato, "Open Sans", sans-serif; }
.menu a { color: #123a52; white-space: nowrap; }
.menu a.on { color: #0fc9bb; font-weight: 700; }

.map { display: block; width: 100%; height: 471px; }
.roads path { fill: none; stroke-linejoin: round; vector-effect: non-scaling-stroke; }
.lab { font-family: Roboto, sans-serif; dominant-baseline: central; paint-order: stroke; stroke: #fff; stroke-width: 3px; stroke-linejoin: round; }
.st { font-size: 12px; fill: #4b5b70; font-weight: 500; }
.road { font-size: 14px; fill: #3a475a; font-weight: 500; }
.area { font-size: 14px; fill: #33383d; font-weight: 500; letter-spacing: 1px; }
.food, .shop, .civic, .place, .park { font-size: 15px; }
.food { fill: #d5611a; }
.shop { fill: #2d78e6; }
.civic { fill: #9a55e0; }
.place { fill: #65798a; }
.park { fill: #2c8a5e; }
.creek { font-size: 12px; fill: #3597ae; stroke: none; }
.shield { font: 700 9px Roboto, sans-serif; fill: #fff; text-anchor: middle; dominant-baseline: central; }
.shield.us { font-size: 11px; font-weight: 500; fill: #47515c; }
.pin-shade { filter: drop-shadow(0 1px 1px #9aa); }

h2 { font-size: 31px; line-height: 28px; }
.side dl { margin-top: 18px; }
.side hr + dl { margin-top: 0; }
.side dl > div { display: grid; grid-template-columns: 84px 1fr; }
.side dl > div + div { margin-top: 21px; }
dt { font-weight: 500; white-space: nowrap; color: #777; }
dd span { display: block; }
.side .connect { margin-top: 20px; }
.social { display: flex; gap: 21px; margin-top: 18px; fill: #fff; }
.social svg { display: block; }
.social .near { margin-left: -8px; }
.pale { fill: #c8c8c8; }
.yt { font: 700 8px Roboto, sans-serif; text-anchor: middle; }
.cut { fill: #123a52; }
.pale .cut { fill: #fff; }

.content { grid-column: span 3; padding: 21px 0 72px; }
h1 { font-size: 30px; line-height: 36px; font-weight: 400; margin-bottom: 12px; }
.content p { margin: 0 -28px 12px 0; }
.row { display: flex; align-items: center; gap: 4px; margin-bottom: 15px; }
label { font-weight: 600; color: #7c7c7c; }
.req { color: #f00; font-weight: 600; }
.row label { margin-bottom: 2px; }
.row input { width: 80%; height: 29px; border: 1px solid #eee; background: #fcfcfc; padding: 4px; }
.block { display: block; margin-bottom: 6px; }
textarea { display: block; width: 100%; height: 188px; border: 1px solid #eee; background: #fcfcfc; resize: vertical; padding: 4px; }
.content hr { margin: 13px 0 21px; }
.captcha { display: flex; align-items: center; width: 316px; height: 79px; padding: 0 11px 0 12px; border: 1px solid #d3d3d3; border-radius: 3px; background: #f9f9f9; box-shadow: 0 0 4px 1px rgba(0, 0, 0, .08); font-family: Roboto, sans-serif; }
.captcha input { appearance: none; width: 28px; height: 28px; margin: 0 14px 4px 0; border: 2px solid #c1c1c1; border-radius: 2px; background: #fff; }
.captcha label { font-size: 15px; font-weight: 400; color: #222; }
.brand { margin-left: auto; padding-top: 5px; display: flex; flex-direction: column; align-items: center; color: #555; }
.rc { font-size: 11px; line-height: 16px; margin-top: 2px; }
.terms { font-size: 9px; line-height: 12px; }
.terms a { color: #555; }
button { display: block; font: 400 15px/20px Lato, "Open Sans", sans-serif; border-radius: 6px; cursor: pointer; height: 32px; padding: 2px 14px 0; white-space: nowrap; }
.submit { margin-top: 16px; color: #123a52; background: #fff; border: 2px solid #123a52; }

.band { height: 60px; background: #1acac0; }
footer { background: #123a52; color: #fff; }
.cols { padding: 37px 0 41px; }
h3 { font-size: 25px; line-height: 32px; margin-bottom: 12px; }
article { padding-bottom: 10px; border-bottom: 1px solid #26495f; }
.touch { list-style: none; line-height: 21px; }
.touch li { display: grid; grid-template-columns: 18px 1fr; gap: 18px; margin-bottom: 10px; }
.touch svg { fill: #fff; }
.cart { display: flex; gap: 7px; }
.cart svg { margin-top: 10px; }
.cart .arrow { margin-left: 6px; }
.empty { line-height: 21px; padding: 3px 32px 0 36px; }
.sum { display: flex; gap: 11px; margin-top: 2px; }
.login label { display: block; color: #fff; }
.login .req { color: #d00; }
.login input { display: block; width: 220px; height: 29px; margin: 6px 0 13px; border: 0; background: #fcfcfc; padding: 4px; }
.acts { display: flex; gap: 6px; align-items: flex-start; }
.acts div { white-space: nowrap; }
.acts button { color: #111; background: #1acac0; border: 2px solid #111; }
.again { margin: 5px 0 0; }
.again + .social { margin-top: 13px; }
.bottom { border-top: 2px solid #1e455d; padding: 21px 0 33px; }
.bottom .wrap { display: flex; justify-content: space-between; }
.bottom nav { display: flex; gap: 21px; padding: 2px 7px 0 0; }
.bottom nav a { color: #fff; }
</style>
